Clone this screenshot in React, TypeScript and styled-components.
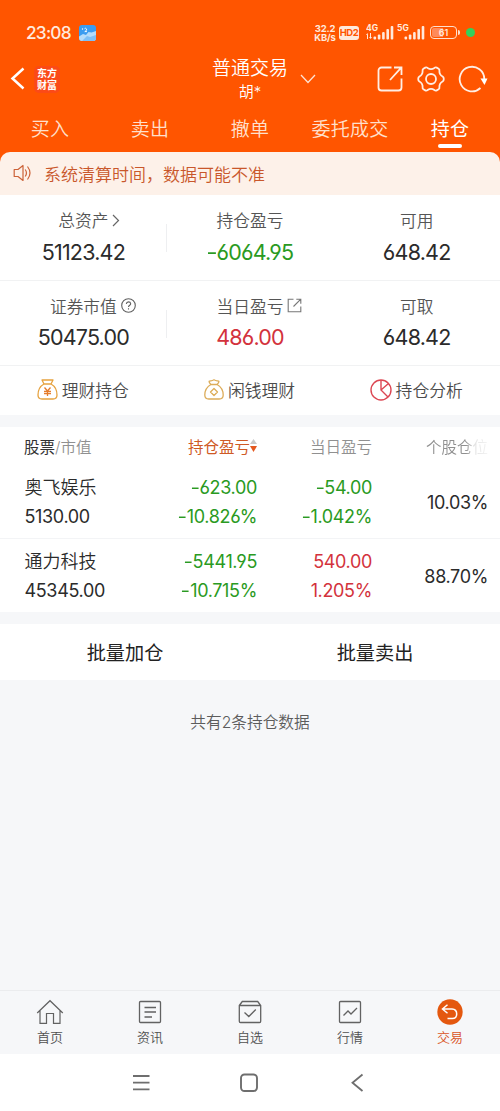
import React from "react";
import styled, { createGlobalStyle } from "styled-components";

const GlobalStyle = createGlobalStyle`
  * { box-sizing: border-box; }
  body {
    margin: 0;
    background: #f6f7f9;
    font-family: Inter, "Noto Sans CJK SC", sans-serif;
    font-feature-settings: "cv03", "cv04";
    font-weight: 350;
    color: #2b2b2b;
  }
  svg { display: block; flex: none; }
`;

const GREEN = "#2a9a22";
const RED = "#d3323c";
const DARK = "#2b2b2b";

const Screen = styled.div`
  width: 500px;
  height: 1111px;
  display: flex;
  flex-direction: column;
  overflow: hidden;
  background: #f6f7f9;
`;

const Header = styled.header`
  height: 164px;
  flex: none;
  margin-bottom: -12px;
  background: #ff5500;
  color: #fff;
`;

const StatusBar = styled.div`
  height: 52px;
  padding: 13px 25px 0 26px;
  display: flex;
  align-items: center;
  justify-content: space-between;
  color: #ffe9dc;
`;

const StatusGroup = styled.div`
  display: flex;
  align-items: center;
`;

const Clock = styled.span`
  font-size: 17.3px;
  line-height: 22px;
  font-weight: 500;
  letter-spacing: -0.8px;
  margin-right: 8px;
`;

const Speed = styled.div`
  width: 22px;
  display: flex;
  flex-direction: column;
  align-items: center;
  font: 700 9.5px/9px Inter, sans-serif;
  letter-spacing: -0.2px;
  margin-right: 3px;
  white-space: nowrap;
  span { height: 9px; overflow: hidden; }
`;

const HdBadge = styled.span`
  width: 20px;
  height: 14px;
  border-radius: 3px;
  background: #ffe9dc;
  color: #ff5500;
  font: 700 9.5px/14px Inter, sans-serif;
  text-align: center;
  letter-spacing: -0.5px;
  margin-right: 6.5px;
`;

const Battery = styled.span`
  width: 27px;
  height: 13px;
  margin-left: 4.5px;
  border: 1.4px solid #ffe0cf;
  border-radius: 4px;
  padding: 1px;
  font: 600 9px/9px Inter, sans-serif;
  text-align: center;
  background: linear-gradient(90deg, #ff8a5a 0 50%, transparent 50%) content-box;
`;

const BatteryTip = styled.span`
  width: 2px;
  height: 5px;
  margin: 0 6px 0 1px;
  border-radius: 0 2px 2px 0;
  background: #ffe0cf;
`;

const GreenDot = styled.span`
  width: 9px;
  height: 9px;
  border-radius: 50%;
  background: #33d15b;
`;

const TitleBar = styled.div`
  height: 54px;
  display: grid;
  grid-template-columns: 1fr 76px 1fr;
  align-items: center;
`;

const TitleLeft = styled.div`
  display: flex;
  align-items: center;
  padding-left: 10px;
`;

const Brand = styled.div`
  display: flex;
  flex-direction: column;
  align-items: center;
  justify-content: center;
  width: 26px;
  height: 27px;
  margin-left: 9px;
  border-radius: 5px;
  background: #fb4a17;
  font: 700 10px/12px "Noto Sans CJK SC", sans-serif;
`;

const TitleText = styled.div`
  padding-top: 2px;
  text-align: center;
  white-space: nowrap;
  font-size: 19px;
  line-height: 24px;
`;

const Account = styled.div`
  font-size: 15px;
  line-height: 22px;
`;

const TitleRight = styled.div`
  display: flex;
  align-items: center;
  justify-content: space-between;
  padding: 0 12px 1px 12px;
`;

const TitleActions = styled.div`
  display: flex;
  gap: 13px;
`;

const Tabs = styled.nav`
  height: 46px;
  display: grid;
  grid-template-columns: repeat(5, 100px);
`;

const Tab = styled.div<{ $active?: boolean }>`
  display: flex;
  flex-direction: column;
  align-items: center;
  padding-top: 10px;
  font-size: 19px;
  line-height: 28px;
  letter-spacing: 0.3px;
  color: ${(p) => (p.$active ? "#fff" : "#ffe0cd")};
  font-weight: ${(p) => (p.$active ? 400 : 350)};
  &::after {
    content: "";
    width: 24px;
    height: 4px;
    border-radius: 2px;
    background: ${(p) => (p.$active ? "#fff" : "transparent")};
  }
`;

const Notice = styled.div`
  position: relative;
  height: 43px;
  flex: none;
  display: flex;
  align-items: center;
  gap: 12px;
  padding: 0 0 1px 13px;
  border-radius: 10px 10px 0 0;
  background: #fdf1e9;
  color: #c9572b;
  font-size: 17px;
`;

const Card = styled.section`
  background: #fff;
  flex: none;
  margin-bottom: 12px;
`;

const SummaryRow = styled.div`
  height: 85.5px;
  display: grid;
  grid-template-columns: repeat(3, 1fr);
  border-bottom: 1px solid #f1f2f3;
`;

const SummaryCell = styled.div<{ $divider?: boolean }>`
  padding-top: 12.5px;
  display: flex;
  flex-direction: column;
  align-items: center;
  background: ${(p) =>
    p.$divider
      ? "linear-gradient(#eeeff1, #eeeff1) right 29px / 1px 28px no-repeat"
      : "none"};
`;

const SummaryLabel = styled.div`
  display: flex;
  align-items: center;
  height: 25px;
  font-size: 16.7px;
  color: #555;
`;

/* Takes no width, so the label text itself stays centred in the cell. */
const LabelIcon = styled.span`
  width: 0;
  margin: 0 -4px 0 4px;
`;

const Value = styled.div<{ $color?: string }>`
  height: 38px;
  font-size: 21.5px;
  line-height: 39px;
  color: ${(p) => p.$color ?? DARK};
  font-weight: 385;
  letter-spacing: -0.8px;
`;

const Minus = styled.span`
  display: inline-block;
  margin-right: 0.8px;
  transform: scaleX(1.15);
`;

const Shortcuts = styled.div`
  height: 49px;
  display: grid;
  grid-template-columns: repeat(3, 1fr);
`;

const Shortcut = styled.div`
  display: flex;
  align-items: center;
  justify-content: center;
  gap: 4px;
  padding: 0 1px 2px 0;
  font-size: 16.8px;
  color: #4c4c4c;
`;

const gridColumns = "160px 97px 115px 128px";

const TableHead = styled.div`
  height: 38px;
  padding-bottom: 1px;
  display: grid;
  grid-template-columns: ${gridColumns};
  align-items: center;
  font-size: 15.5px;
  color: #909090;
  white-space: nowrap;
`;

const HeadName = styled.div`
  padding-left: 24px;
  b { font-weight: 400; color: #333; }
`;

const HeadCell = styled.div<{ $sorted?: boolean }>`
  display: flex;
  align-items: center;
  justify-content: flex-end;
  color: ${(p) => (p.$sorted ? "#cf5a26" : "#909090")};
  font-weight: ${(p) => (p.$sorted ? 400 : 350)};
`;

const HeadFade = styled.div`
  padding-left: 54px;
  overflow: hidden;
  mask-image: linear-gradient(90deg, #000 94px, rgba(0, 0, 0, 0.25) 102px, rgba(0, 0, 0, 0.1) 116px);
`;

const Holding = styled.div`
  height: 74px;
  display: grid;
  grid-template-columns: ${gridColumns};
  align-items: center;
  border-bottom: 1px solid #f3f4f6;
  &:last-child { border-bottom: 0; height: 73px; }
`;

const Stack = styled.div<{ $color?: string; $left?: boolean }>`
  display: flex;
  flex-direction: column;
  align-items: ${(p) => (p.$left ? "flex-start" : "flex-end")};
  padding: 1px 0 0 ${(p) => (p.$left ? 24.5 : 0)}px;
  color: ${(p) => p.$color ?? DARK};
  font-size: 18px;
  line-height: 29px;
`;

const Figure = styled.span`
  font-weight: 385;
  letter-spacing: -0.35px;
`;

const Share = styled.div`
  text-align: right;
  padding: 2px 12px 0 0;
  font-size: 18px;
  line-height: 26px;
`;

const BatchBar = styled.div`
  height: 56px;
  flex: none;
  display: grid;
  grid-template-columns: 1fr 1fr;
  place-items: center;
  background: #fff;
  font-size: 19.2px;
  font-weight: 400;
  color: #222;
`;

const Count = styled.p`
  margin: 31px 0 0;
  flex: 1;
  text-align: center;
  font-size: 15.7px;
  line-height: 24px;
  color: #5c5c5c;
`;

const BottomNav = styled.nav`
  height: 64px;
  flex: none;
  display: grid;
  grid-template-columns: repeat(5, 1fr);
  border-top: 1px solid #ebecee;
`;

const NavItem = styled.div<{ $active?: boolean }>`
  display: flex;
  flex-direction: column;
  align-items: center;
  padding-top: 7px;
  gap: 1px;
  font-size: 13px;
  line-height: 20px;
  color: ${(p) => (p.$active ? "#d9541e" : "#505050")};
`;

const SystemBar = styled.div`
  height: 57px;
  flex: none;
  display: flex;
  justify-content: center;
  align-items: center;
  gap: 88px;
  padding-right: 3px;
  background: #fff;
`;

const Weather = () => (
  <svg width="17" height="16" viewBox="0 0 17 16">
    <rect width="17" height="16" rx="3" fill="#3b9cf0" />
    <path d="M0 11.5 4 9l3 1 2.5-3 3 .5L17 6v7a3 3 0 0 1-3 3H3a3 3 0 0 1-3-3z" fill="#b5dcfa" />
    <path d="M3 16 8 11l3 1 6-2v3a3 3 0 0 1-3 3z" fill="#7fc0f5" />
    <path d="M5.5 3.8Q7 2.5 7.6 4T5.8 6.6H8" fill="none" stroke="#fff" strokeWidth=".9" />
    <circle cx="3.5" cy="4" r=".7" fill="#fff" />
  </svg>
);

const Signal = ({ label, data }: { label: string; data?: boolean }) => (
  <svg width={data ? 31 : 29} height="17" viewBox={data ? "0 0 31 17" : "0 0 29 17"} fill="#ffe9dc">
    <text x="0" y="7.3" fontFamily="Inter" fontWeight="700" fontSize="8.5">{label}</text>
    {data && <path d="M1.6 9 0 11h1v4h1v-4zM4.600 15 6 13H5V9H4v4H3z" />}
    {[0, 1, 2, 3, 4].map((i) => {
      const h = [3, 5, 7.5, 10.5, 13.5][i];
      return <rect key={i} x={7.5 + i * 4.3} y={15.5 - h} width="2.6" height={h} rx="1" />;
    })}
  </svg>
);

const Back = () => (
  <svg width="15" height="24" viewBox="0 0 15 24" fill="none" stroke="#fff" strokeWidth="2.5">
    <path d="M13.500 1.500 2.500 11.500l11 10" />
  </svg>
);

const ChevronDown = () => (
  <svg width="16" height="10" viewBox="0 0 16 10" fill="none" stroke="#ffe3d2" strokeWidth="1.3">
    <path d="m1 1 7 7.500L15 1" />
  </svg>
);

const OpenOut = () => (
  <svg width="28" height="28" viewBox="0 0 28 28" fill="none" stroke="#ffeee4" strokeWidth="1.8">
    <path d="M15.500 2.500H5.500a3 3 0 0 0-3 3v17a3 3 0 0 0 3 3h17a3 3 0 0 0 3-3V13.500M14 15 25 2.800M18 2.500h7.500V10" />
  </svg>
);

const Gear = () => (
  <svg width="28" height="28" viewBox="0 0 28 28" fill="none" stroke="#ffeee4" strokeWidth="1.8" strokeLinejoin="round">
    <path d="M8.300 2.600Q9.500 2 10.600 2.900 14 5.200 17.400 2.900 18.500 2 19.700 2.600L21.600 3.700Q22.700 4.500 22.400 5.900 22.200 9.700 25.600 11.500 26.800 12.200 26.800 14T25.600 16.500Q22.200 18.300 22.400 22.100 22.700 23.500 21.600 24.300L19.700 25.400Q18.500 26 17.400 25.100 14 22.800 10.600 25.100 9.500 26 8.300 25.400L6.400 24.300Q5.300 23.500 5.600 22.100 5.800 18.300 2.400 16.500 1.200 15.800 1.200 14T2.400 11.500Q5.800 9.700 5.600 5.900 5.300 4.500 6.400 3.700Z" />
    <circle cx="14" cy="14" r="5" />
  </svg>
);

const Refresh = () => (
  <svg width="30" height="28" viewBox="0 0 30 28" fill="none" stroke="#ffeee4" strokeWidth="1.8">
    <path d="M26.300 14A12.300 12.300 0 1 0 22.500 23" />
    <path d="M22.500 13.500h7L26.500 20z" fill="#fff" stroke="none" />
  </svg>
);

const Speaker = () => (
  <svg width="19" height="18" viewBox="0 0 19 18" fill="none" stroke="#cc6238" strokeWidth="1.2" strokeLinejoin="round">
    <path d="M1.200 5.500H5l5-4v15l-5-4H1.200z" />
    <path d="M12.200 5.500q2.500 3.500 0 7M14.500 2.500q5 6.500 0 13" />
  </svg>
);

const ChevronRight = () => (
  <svg width="8" height="13" viewBox="0 0 8 13" fill="none" stroke="#666" strokeWidth="1.2">
    <path d="m1 1 5.500 5.500L1 12" />
  </svg>
);

const Help = () => (
  <svg width="15" height="15" viewBox="0 0 15 15" fill="none" stroke="#606060" strokeWidth="1.100">
    <circle cx="7.500" cy="7.500" r="6.800" />
    <path d="M5.300 6Q5.500 3.900 7.500 3.900T9.700 5.800C9.700 7.200 7.500 7.300 7.500 9M7.500 10.300v1.200" />
  </svg>
);

const LinkOut = () => (
  <svg width="15" height="15" viewBox="0 0 15 15" fill="none" stroke="#777" strokeWidth="1.100">
    <path d="M6.500 1.200H1.200v12.600h12.600V8.500M6.500 8.500l7.300-7.300M9.300 1.200h4.500v4.500" />
  </svg>
);

const YuanBag = () => (
  <svg width="21" height="21" viewBox="0 0 21 21" fill="none" stroke="#e6a23f" strokeWidth="1.300" strokeLinejoin="round">
    <path d="M5 1h11l-2 4H7zM7 5C2.500 7.500 1 12 1 16q0 4 4 4h11q4 0 4-4c0-4-1.500-8.500-6-11" />
    <path d="m7.500 8.500 3 3.500 3-3.500M10.500 12v5M7 12.300h7M7 14.500h7" stroke="#e57c2b" />
  </svg>
);

const CoinBag = () => (
  <svg width="20" height="21" viewBox="0 0 20 21" fill="none" stroke="#dcac59" strokeWidth="1.300" strokeLinejoin="round">
    <path d="M7 5.500Q3.500 2 6.500 1.800 8 2 10 .8 12 2 13.500 1.800 16.500 2 13 5.500zM7 5.500C2.500 8 .8 12 .8 16q0 4 4 4h10.400q4 0 4-4c0-4-1.700-8-6.200-10.500M10 9.500l3.500 3.500-3.500 3.500L6.500 13z" />
  </svg>
);

const Pie = () => (
  <svg width="22" height="22" viewBox="0 0 22 22" fill="none" stroke="#dc4753" strokeWidth="1.400">
    <circle cx="11" cy="11" r="10" />
    <path d="M11 1v10l7 7M11 11l7.500-6.500" />
  </svg>
);

const SortMark = () => (
  <svg width="7" height="15" viewBox="0 0 7 15">
    <path d="M3.500 1 7 6H0z" fill="#c9c9c9" />
    <path d="M0 8h7l-3.500 6z" fill="#e4581f" />
  </svg>
);

const Home = () => (
  <svg width="28" height="28" viewBox="0 0 28 28" fill="none" stroke="#626262" strokeWidth="1.200">
    <path d="M1.200 15 14 2.700 26.800 15M4 12.500V25.300h6.500V15.500h7v9.800H24V12.500" />
  </svg>
);

const News = () => (
  <svg width="28" height="28" viewBox="0 0 28 28" fill="none" stroke="#626262" strokeWidth="1.300">
    <rect x="3.500" y="3.500" width="21" height="21" rx="1" />
    <path d="M8.500 9.500h11.500M8.500 14h11.500M8.500 19h7.500" />
  </svg>
);

const Watch = () => (
  <svg width="28" height="28" viewBox="0 0 28 28" fill="none" stroke="#626262" strokeWidth="1.300">
    <path d="m3.300 7.500 3-4h15.400l3 4v15.800q0 1.200-1.200 1.200H4.500q-1.200 0-1.200-1.200zM3.300 7.500h21.400M8.500 14.500l4.300 4 7-7" />
  </svg>
);

const Market = () => (
  <svg width="28" height="28" viewBox="0 0 28 28" fill="none" stroke="#626262" strokeWidth="1.300">
    <rect x="3.500" y="3.500" width="21" height="21" rx="1" />
    <path d="m7.500 17.500 4.500-4.500 3 3 6-6" />
  </svg>
);

const Trade = () => (
  <svg width="28" height="28" viewBox="0 0 28 28" fill="none" stroke="#fff" strokeWidth="1.500">
    <circle cx="14" cy="14" r="12.700" fill="#e4580f" stroke="none" />
    <path d="M11.500 6.800 6.500 11l5 4.200M6.500 11H16q4.700.3 4.700 5T16 20.500h-4.500" />
  </svg>
);

const MenuKey = () => (
  <svg width="18" height="20" viewBox="0 0 18 20" stroke="#6e6e6e" strokeWidth="1.800">
    <path d="M0 3h16.500M0 9.700h16.500M0 16.400h16.500" />
  </svg>
);

const HomeKey = () => (
  <svg width="20" height="20" viewBox="0 0 20 20" fill="none" stroke="#6e6e6e" strokeWidth="1.900">
    <rect x="2" y="1.500" width="16" height="16.500" rx="3.500" />
  </svg>
);

const BackKey = () => (
  <svg width="18" height="20" viewBox="0 0 18 20" fill="none" stroke="#6e6e6e" strokeWidth="1.800">
    <path d="M15.500 1.500 5.500 9.700l10 8.300" />
  </svg>
);

const Amount = ({ text }: { text: string }) =>
  text.startsWith("-") ? (
    <>
      <Minus>-</Minus>
      {text.slice(1)}
    </>
  ) : (
    <>{text}</>
  );

const holdings = [
  { name: "奥飞娱乐", value: "5130.00", gain: "-623.00", gainPct: "-10.826%", day: "-54.00", dayPct: "-1.042%", dayColor: GREEN, share: "10.03%" },
  { name: "通力科技", value: "45345.00", gain: "-5441.95", gainPct: "-10.715%", day: "540.00", dayPct: "1.205%", dayColor: RED, share: "88.70%" },
];

const navItems = [
  { label: "首页", icon: <Home /> },
  { label: "资讯", icon: <News /> },
  { label: "自选", icon: <Watch /> },
  { label: "行情", icon: <Market /> },
  { label: "交易", icon: <Trade />, active: true },
];

export default function App() {
  return (
    <Screen>
      <GlobalStyle />
      <Header>
        <StatusBar>
          <StatusGroup>
            <Clock>23:08</Clock>
            <Weather />
          </StatusGroup>
          <StatusGroup>
            <Speed>
              <span>32.2</span>
              <span>KB/s</span>
            </Speed>
            <HdBadge>HD2</HdBadge>
            <Signal label="4G" data />
            <Signal label="5G" />
            <Battery>61</Battery>
            <BatteryTip />
            <GreenDot />
          </StatusGroup>
        </StatusBar>
        <TitleBar>
          <TitleLeft>
            <Back />
            <Brand>
              <span>东方</span>
              <span>财富</span>
            </Brand>
          </TitleLeft>
          <TitleText>
            普通交易
            <Account>胡*</Account>
          </TitleText>
          <TitleRight>
            <ChevronDown />
            <TitleActions>
              <OpenOut />
              <Gear />
              <Refresh />
            </TitleActions>
          </TitleRight>
        </TitleBar>
        <Tabs>
          {["买入", "卖出", "撤单", "委托成交", "持仓"].map((t) => (
            <Tab key={t} $active={t === "持仓"}>{t}</Tab>
          ))}
        </Tabs>
      </Header>
      <Notice>
        <Speaker />
        系统清算时间，数据可能不准
      </Notice>
      <Card>
        <SummaryRow>
          <SummaryCell $divider>
            <SummaryLabel>总资产<LabelIcon><ChevronRight /></LabelIcon></SummaryLabel>
            <Value>51123.42</Value>
          </SummaryCell>
          <SummaryCell>
            <SummaryLabel>持仓盈亏</SummaryLabel>
            <Value $color={GREEN}><Amount text="-6064.95" /></Value>
          </SummaryCell>
          <SummaryCell>
            <SummaryLabel>可用</SummaryLabel>
            <Value>648.42</Value>
          </SummaryCell>
        </SummaryRow>
        <SummaryRow>
          <SummaryCell $divider>
            <SummaryLabel>证券市值<LabelIcon><Help /></LabelIcon></SummaryLabel>
            <Value>50475.00</Value>
          </SummaryCell>
          <SummaryCell>
            <SummaryLabel>当日盈亏<LabelIcon><LinkOut /></LabelIcon></SummaryLabel>
            <Value $color={RED}>486.00</Value>
          </SummaryCell>
          <SummaryCell>
            <SummaryLabel>可取</SummaryLabel>
            <Value>648.42</Value>
          </SummaryCell>
        </SummaryRow>
        <Shortcuts>
          <Shortcut><YuanBag />理财持仓</Shortcut>
          <Shortcut><CoinBag />闲钱理财</Shortcut>
          <Shortcut><Pie />持仓分析</Shortcut>
        </Shortcuts>
      </Card>
      <Card>
        <TableHead>
          <HeadName><b>股票</b>/市值</HeadName>
          <HeadCell $sorted>持仓盈亏<SortMark /></HeadCell>
          <HeadCell>当日盈亏</HeadCell>
          <HeadFade>个股仓位</HeadFade>
        </TableHead>
        {holdings.map((h) => (
          <Holding key={h.name}>
            <Stack $left>
              <span>{h.name}</span>
              <Figure>{h.value}</Figure>
            </Stack>
            <Stack $color={GREEN}>
              <Figure><Amount text={h.gain} /></Figure>
              <Figure><Amount text={h.gainPct} /></Figure>
            </Stack>
            <Stack $color={h.dayColor}>
              <Figure><Amount text={h.day} /></Figure>
              <Figure><Amount text={h.dayPct} /></Figure>
            </Stack>
            <Share><Figure>{h.share}</Figure></Share>
          </Holding>
        ))}
      </Card>
      <BatchBar>
        <span>批量加仓</span>
        <span>批量卖出</span>
      </BatchBar>
      <Count>共有2条持仓数据</Count>
      <BottomNav>
        {navItems.map((n) => (
          <NavItem key={n.label} $active={n.active}>
            {n.icon}
            {n.label}
          </NavItem>
        ))}
      </BottomNav>
      <SystemBar>
        <MenuKey />
        <HomeKey />
        <BackKey />
      </SystemBar>
    </Screen>
  );
}
